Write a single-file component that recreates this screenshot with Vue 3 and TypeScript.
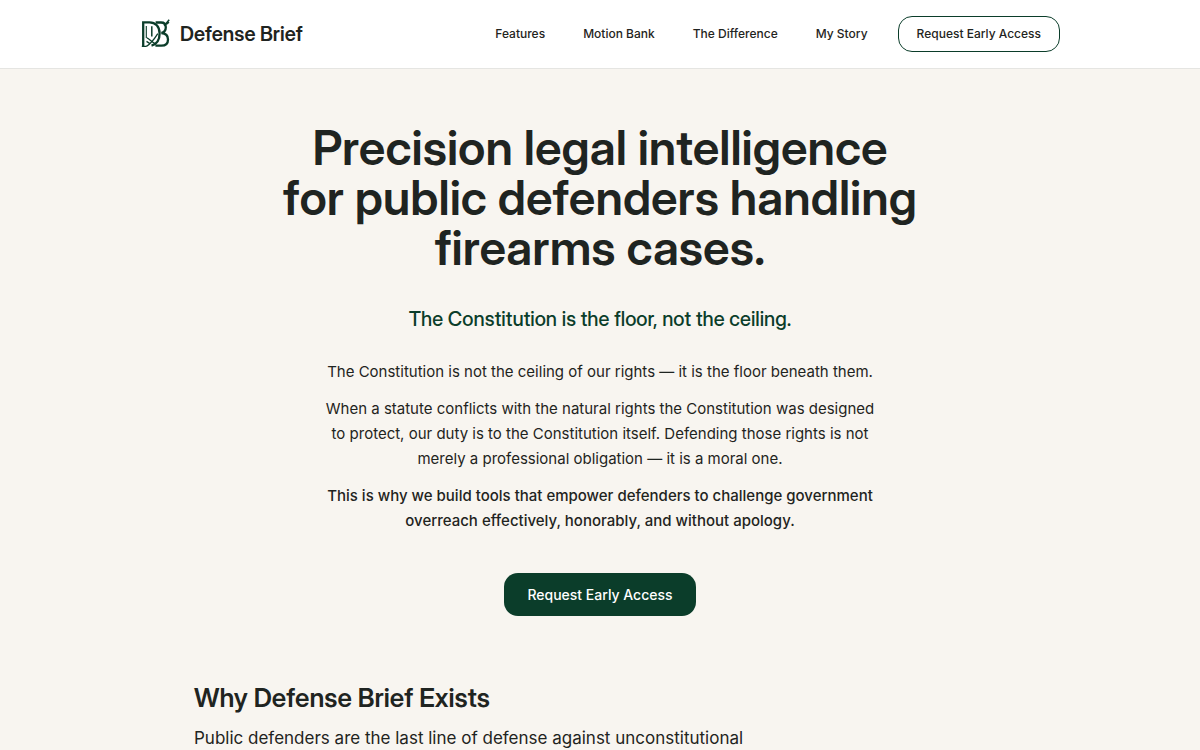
<script setup lang="ts">
interface NavItem {
  label: string
  href: string
}

const navItems: NavItem[] = [
  { label: 'Features', href: '#features' },
  { label: 'Motion Bank', href: '#motion-bank' },
  { label: 'The Difference', href: '#difference' },
  { label: 'My Story', href: '#story' },
]
</script>

<template>
  <div class="page">
    <header class="site-header">
      <div class="header-inner">
        <a class="brand display" href="#top">
          <svg class="brand-mark" viewBox="0 0 30 30" aria-hidden="true">
            <g fill="none" stroke="currentColor">
              <path stroke-width="2.3" d="M3.2 27.6V3.3H9.5C15.5 3.3 19.6 7.6 19.6 14.4C19.6 21 16.4 25.2 11.5 26.6" />
              <path stroke-width="1.1" d="M6.3 19V7M1.8 27.4H6.6" />
              <path stroke-width="1.5" d="M11.8 7.2V17.5" />
              <path stroke-width="1.3" d="M6.4 27.4C10.5 25 14 20.5 17.8 14.6M6.8 18.8C9 19.4 11 22.6 15.6 24.8M6.5 22.4L10 24.6" />
              <path stroke-width="2.3" d="M15.6 3.5H21C24.4 3.5 25.8 5.6 25.8 8.3C25.8 11.4 24.2 13.4 21.4 14C25.8 14.4 28 16.8 28 20.4C28 24.4 25.4 26.6 21.4 26.6H15.4" />
              <path stroke-width="1.5" d="M24.2 6.8L29.2 0.8M26.2 5.4L29 3.2" />
            </g>
          </svg>
          <span>Defense Brief</span>
        </a>
        <nav class="nav" aria-label="Main">
          <a v-for="item in navItems" :key="item.href" class="nav-link" :href="item.href">{{ item.label }}</a>
          <button class="button button-outline" type="button">Request Early Access</button>
        </nav>
      </div>
    </header>

    <main>
      <section class="hero">
        <h1 class="display">Precision legal intelligence<br />for public defenders handling<br />firearms cases.</h1>
        <p class="tagline display">The Constitution is the floor, not the ceiling.</p>
        <div class="statement">
          <p>The Constitution is not the ceiling of our rights — it is the floor beneath them.</p>
          <p>
            When a statute conflicts with the natural rights the Constitution was designed to protect, our duty is to
            the Constitution itself. Defending those rights is not merely a professional obligation — it is a moral one.
          </p>
          <p class="strong">
            This is why we build tools that empower defenders to challenge government overreach effectively, honorably,
            and without apology.
          </p>
        </div>
        <button class="button button-solid" type="button">Request Early Access</button>
      </section>

      <section class="why">
        <h2 class="display">Why Defense Brief Exists</h2>
        <p>Public defenders are the last line of defense against unconstitutional</p>
      </section>
    </main>
  </div>
</template>

<style>
body {
  background: #f8f5f0;
}
</style>

<style scoped>
.page {
  font-family: Inter, "Liberation Sans", sans-serif;
  color: #1f2421;
  background: #f8f5f0;
}

h1,
h2,
p {
  margin: 0;
}

.display {
  font-family: "Inter Display", Inter, "Liberation Sans", sans-serif;
  font-variation-settings: "opsz" 32;
}

.site-header {
  background: #ffffff;
  border-bottom: 1px solid #e5e5e2;
}

.header-inner {
  display: flex;
  align-items: center;
  justify-content: space-between;
  max-width: 920px;
  margin: 0 auto;
  padding: 16px 20px;
}

.brand {
  display: flex;
  align-items: center;
  gap: 10px;
  color: inherit;
  font-size: 20px;
  font-weight: 600;
  text-decoration: none;
}

.brand-mark {
  width: 30px;
  height: 30px;
  color: #0b3d2a;
}

.nav {
  display: flex;
  align-items: center;
  gap: 38px;
}

.nav-link {
  color: inherit;
  font-size: 12px;
  font-weight: 500;
  line-height: 36px;
  text-decoration: none;
}

.button {
  font-family: inherit;
  font-weight: 500;
  cursor: pointer;
}

.button-outline {
  margin-left: -8px;
  padding: 0 18px;
  border: 1px solid #0b3d2a;
  border-radius: 14px;
  background: #ffffff;
  color: #1f2421;
  font-size: 12px;
  line-height: 34px;
}

.hero {
  display: flex;
  flex-direction: column;
  align-items: center;
  padding: 54px 20px 64px;
  text-align: center;
}

h1 {
  font-size: 48px;
  font-weight: 600;
  line-height: 50px;
}

.tagline {
  margin-top: 30px;
  color: #0b3d2a;
  font-size: 20px;
  font-weight: 500;
  line-height: 32px;
}

.statement {
  display: flex;
  flex-direction: column;
  gap: 12px;
  max-width: 560px;
  margin-top: 24px;
  font-size: 15px;
  line-height: 25px;
}

.strong {
  font-weight: 500;
}

.button-solid {
  margin-top: 40px;
  padding: 0 23px;
  border: 0;
  border-radius: 14px;
  background: #0b3d2a;
  color: #ffffff;
  font-size: 14px;
  line-height: 43px;
}

.why {
  max-width: 812px;
  margin: 0 auto;
  padding: 0 20px;
}

h2 {
  font-size: 26px;
  font-weight: 600;
  line-height: 36px;
}

.why p {
  margin-top: 8px;
  font-size: 17px;
  line-height: 28px;
}
</style>
